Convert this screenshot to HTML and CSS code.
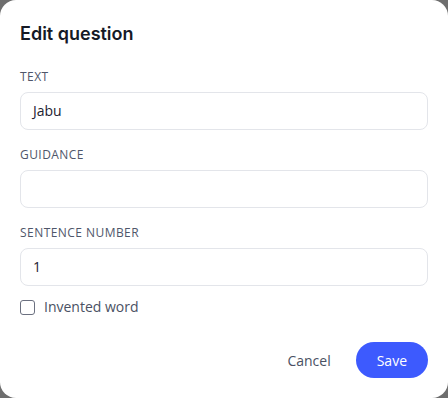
FILE: index.html
```html
<!DOCTYPE html>
<html>
<head>
<meta charset="utf-8">
<link rel="stylesheet" href="styles.css">
</head>
<body>
<div class="dialog">
  <h2 class="title">Edit question</h2>
  <div class="field">
    <label class="label">Text</label>
    <div class="input">Jabu</div>
  </div>
  <div class="field">
    <label class="label">Guidance</label>
    <div class="input"></div>
  </div>
  <div class="field">
    <label class="label">Sentence number</label>
    <div class="input">1</div>
  </div>
  <label class="check"><span class="box"></span><span>Invented word</span></label>
  <div class="actions">
    <button class="btn cancel">Cancel</button>
    <button class="btn save">Save</button>
  </div>
</div>
</body>
</html>
```

FILE: styles.css
```css
html, body {
  margin: 0;
  padding: 0;
  background: #6e6e6e;
  height: 100%;
}
.dialog {
  box-sizing: border-box;
  width: 448px;
  height: 398px;
  background: #ffffff;
  border-radius: 16px;
  padding: 22px 20px 20px 20px;
  font-family: "Open Sans", sans-serif;
  display: flex;
  flex-direction: column;
}
.title {
  margin: 0 0 23px 0;
  font-family: Inter, sans-serif;
  font-weight: 600;
  font-size: 18px;
  line-height: 24px;
  color: #151a26;
}
.field {
  display: flex;
  flex-direction: column;
  margin-bottom: 17px;
}
.label {
  font-size: 12px;
  font-weight: 500;
  line-height: 16px;
  text-transform: uppercase;
  letter-spacing: 0.45px;
  color: #4f566a;
  margin-bottom: 7px;
}
.input {
  box-sizing: border-box;
  height: 38px;
  border: 1px solid #e3e5ea;
  border-radius: 8px;
  padding: 0 12px;
  font-size: 14px;
  line-height: 36px;
  color: #1d2230;
}
.check {
  display: flex;
  align-items: center;
  gap: 9px;
  font-size: 14px;
  color: #4a5163;
  margin-top: -6px;
  line-height: 20px;
}
.box {
  box-sizing: border-box;
  width: 15px;
  height: 15px;
  border: 1px solid #6b7080;
  border-radius: 3px;
}
.actions {
  margin-top: auto;
  display: flex;
  justify-content: flex-end;
  align-items: center;
  gap: 9px;
}
.btn {
  font-family: "Open Sans", sans-serif;
  font-size: 14px;
  font-weight: 500;
  border: none;
  height: 36px;
  border-radius: 18px;
  padding: 0 16px;
  cursor: pointer;
}
.cancel {
  background: transparent;
  color: #4a5163;
}
.save {
  background: #3d5afe;
  color: #ffffff;
  padding: 0 21px;
}
```
